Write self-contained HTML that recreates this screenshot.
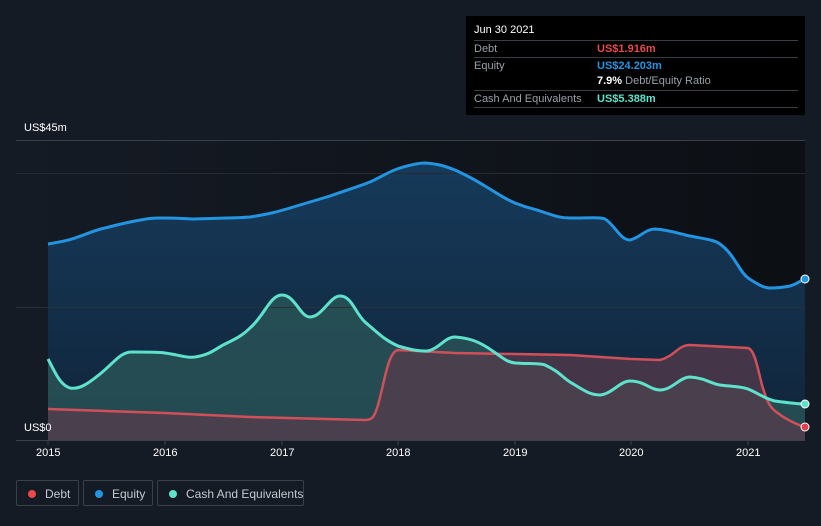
<!DOCTYPE html>
<html><head><style>
html,body{margin:0;width:821px;height:526px;overflow:hidden}
body{background:#151b25;font-family:"Liberation Sans",sans-serif;position:relative}
.tt{position:absolute;left:466px;top:16px;width:339px;height:99px;background:#000;color:#fff;font-size:11px}
.row{position:absolute;left:8px;width:324px;border-top:1px solid #3a3d44;height:16px;line-height:16px;color:#9aa0a8;white-space:nowrap}
.v{position:absolute;left:123px}
.lg{position:absolute;top:480px;height:26px;border:1px solid #3a404b;border-radius:2px;color:#c5c9cf;font-size:12px;line-height:26px;box-sizing:border-box;white-space:nowrap}
.lg i{position:absolute;left:11px;top:9px;width:8px;height:8px;border-radius:50%}
.lg span{position:absolute;left:28px}
.ax{position:absolute;top:447px;color:#fff;font-size:11px}
</style></head><body>
<svg width="821" height="526" style="position:absolute;left:0;top:0">
<defs>
<linearGradient id="bg" x1="0" x2="1" y1="0" y2="0"><stop offset="0" stop-color="#151b25"/><stop offset="1" stop-color="#0c0f14"/></linearGradient>
<linearGradient id="eq" x1="0" x2="0" y1="0" y2="1"><stop offset="0" stop-color="#163a5a"/><stop offset="1" stop-color="#10243a"/></linearGradient>
</defs>
<rect x="16" y="140" width="789" height="300" fill="url(#bg)"/>
<path d="M48,244 C60,242 70,240 75,238 C90,233 95,230 105,228 C120,224 130,222 135,221 C150,218 155,218 160,218 C180,218 190,219 195,219 C220,218 240,218 250,217 C270,214 280,211 290,208 C310,202 320,199 330,196 C350,189 360,186 370,182 C385,175 390,171 400,168 C410,165 420,163 425,163 C440,164 447,167 455,170 C470,177 475,180 485,186 C500,195 505,199 515,203 C530,209 535,209 540,211 C555,216 560,218 570,218 C590,218 600,217 605,219 C615,225 620,240 630,240 C640,238 645,229 655,229 C670,230 680,234 690,236 C705,239 715,240 720,244 C735,255 738,270 748,278 C760,286 765,288 770,288 C780,288 785,287 790,286 C797,284 800,281 805,279 L805,440 L48,440Z" fill="url(#eq)"/>
<path d="M48,359 C55,372 60,385 70,388 C80,390 90,382 100,374 C115,362 120,352 132,352 C150,352 160,352 165,353 C180,355 185,358 195,357 C210,355 215,349 225,344 C240,337 245,333 250,328 C265,315 270,295 282,295 C295,295 300,317 310,317 C322,317 330,296 340,296 C352,296 355,313 365,322 C380,335 385,340 398,346 C415,351 420,351 428,351 C440,348 445,337 455,337 C470,338 478,342 485,346 C500,355 505,362 515,363 C530,364 540,363 545,365 C560,372 562,377 570,382 C585,391 590,395 600,395 C612,394 620,381 630,381 C645,381 650,390 660,390 C672,390 680,377 690,377 C705,378 712,384 720,385 C735,387 740,386 748,389 C760,394 765,399 775,401 C790,403 798,404 805,404 L805,440 L48,440Z" fill="#2a5558" fill-opacity="0.8"/>
<path d="M48,409 L165,413 L250,417 L365,420 C372,420 374,418 378,405 C385,380 388,352 398,350 L455,353 L570,355 L631,359 L660,360 C675,356 678,345 690,345 L748,348 C755,350 758,370 762,385 C766,398 768,405 775,411 C785,419 795,424 805,427 L805,440 L48,440Z" fill="#5a3a4c" fill-opacity="0.7"/>
<line x1="16" y1="140.5" x2="805" y2="140.5" stroke="#3a3f48"/>
<line x1="16" y1="173.5" x2="805" y2="173.5" stroke="#262b33"/>
<line x1="16" y1="307.5" x2="805" y2="307.5" stroke="#2a3038"/>
<line x1="16" y1="440.5" x2="805" y2="440.5" stroke="#3a3f48"/>
<g stroke="#3a3f48"><line x1="48" y1="440" x2="48" y2="445"/><line x1="165" y1="440" x2="165" y2="445"/><line x1="282" y1="440" x2="282" y2="445"/><line x1="398" y1="440" x2="398" y2="445"/><line x1="515" y1="440" x2="515" y2="445"/><line x1="631" y1="440" x2="631" y2="445"/><line x1="748" y1="440" x2="748" y2="445"/></g>
<path d="M48,244 C60,242 70,240 75,238 C90,233 95,230 105,228 C120,224 130,222 135,221 C150,218 155,218 160,218 C180,218 190,219 195,219 C220,218 240,218 250,217 C270,214 280,211 290,208 C310,202 320,199 330,196 C350,189 360,186 370,182 C385,175 390,171 400,168 C410,165 420,163 425,163 C440,164 447,167 455,170 C470,177 475,180 485,186 C500,195 505,199 515,203 C530,209 535,209 540,211 C555,216 560,218 570,218 C590,218 600,217 605,219 C615,225 620,240 630,240 C640,238 645,229 655,229 C670,230 680,234 690,236 C705,239 715,240 720,244 C735,255 738,270 748,278 C760,286 765,288 770,288 C780,288 785,287 790,286 C797,284 800,281 805,279" fill="none" stroke="#2394e0" stroke-width="3"/>
<path d="M48,409 L165,413 L250,417 L365,420 C372,420 374,418 378,405 C385,380 388,352 398,350 L455,353 L570,355 L631,359 L660,360 C675,356 678,345 690,345 L748,348 C755,350 758,370 762,385 C766,398 768,405 775,411 C785,419 795,424 805,427" fill="none" stroke="#d0505a" stroke-width="2.5"/>
<path d="M48,359 C55,372 60,385 70,388 C80,390 90,382 100,374 C115,362 120,352 132,352 C150,352 160,352 165,353 C180,355 185,358 195,357 C210,355 215,349 225,344 C240,337 245,333 250,328 C265,315 270,295 282,295 C295,295 300,317 310,317 C322,317 330,296 340,296 C352,296 355,313 365,322 C380,335 385,340 398,346 C415,351 420,351 428,351 C440,348 445,337 455,337 C470,338 478,342 485,346 C500,355 505,362 515,363 C530,364 540,363 545,365 C560,372 562,377 570,382 C585,391 590,395 600,395 C612,394 620,381 630,381 C645,381 650,390 660,390 C672,390 680,377 690,377 C705,378 712,384 720,385 C735,387 740,386 748,389 C760,394 765,399 775,401 C790,403 798,404 805,404" fill="none" stroke="#5ee2cc" stroke-width="3"/>
<circle cx="805" cy="279" r="4" fill="#2394e0" stroke="#fff" stroke-width="1"/>
<circle cx="805" cy="404" r="4" fill="#5ee2cc" stroke="#fff" stroke-width="1"/>
<circle cx="805" cy="427" r="4" fill="#e0404a" stroke="#fff" stroke-width="1"/>
</svg>
<div style="position:absolute;left:24px;top:122px;color:#fff;font-size:11px">US$45m</div>
<div style="position:absolute;left:24px;top:422px;color:#fff;font-size:11px">US$0</div>
<div class="ax" style="left:36px">2015</div><div class="ax" style="left:153px">2016</div><div class="ax" style="left:270px">2017</div><div class="ax" style="left:386px">2018</div><div class="ax" style="left:503px">2019</div><div class="ax" style="left:619px">2020</div><div class="ax" style="left:736px">2021</div>
<div class="tt">
<div style="position:absolute;left:8px;top:8px;font-size:11px;color:#fff">Jun 30 2021</div>
<div class="row" style="top:24px">Debt<span class="v" style="color:#e84a4a;font-weight:bold">US$1.916m</span></div>
<div class="row" style="top:41px">Equity<span class="v" style="color:#2394e0;font-weight:bold">US$24.203m</span></div>
<div class="row" style="top:57px;border-top:0"><span class="v"><b style="color:#fff">7.9%</b> Debt/Equity Ratio</span></div>
<div class="row" style="top:74px;border-bottom:1px solid #3a3d44">Cash And Equivalents<span class="v" style="color:#5ee2cc;font-weight:bold">US$5.388m</span></div>
</div>
<div class="lg" style="left:16px;width:63px"><i style="background:#e84a4a"></i><span>Debt</span></div>
<div class="lg" style="left:83px;width:70px"><i style="background:#2394e0"></i><span>Equity</span></div>
<div class="lg" style="left:157px;width:147px"><i style="background:#5ee2cc"></i><span>Cash And Equivalents</span></div>
</body></html>
